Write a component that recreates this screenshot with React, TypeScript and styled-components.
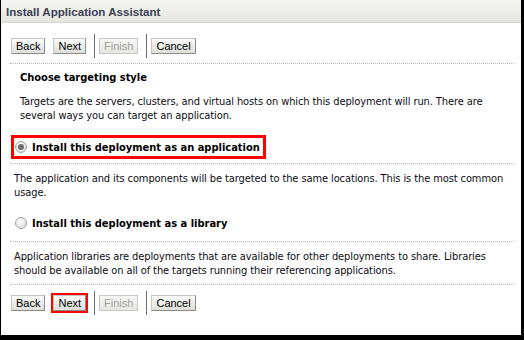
import React from "react";
import styled, { createGlobalStyle, css } from "styled-components";

const Global = createGlobalStyle`
  html, body { margin: 0; padding: 0; background: #ffffff; }
  * { box-sizing: border-box; }
`;

const Frame = styled.div`
  width: 524px;
  height: 340px;
  background: #fff;
  border-right: 3px solid #000;
  border-bottom: 5px solid #000;
  border-left: 1px solid #000;
  display: flex;
  flex-direction: column;
  font-family: "DejaVu Sans Condensed", "Liberation Sans", sans-serif;
  font-size: 11px;
  letter-spacing: -0.1px;
  color: #000;
  overflow: hidden;
`;

const TitleBar = styled.div`
  height: 23px;
  flex: none;
  background: linear-gradient(#f6f6f3, #e6e6e0);
  border-bottom: 1px solid #d6d6d1;
  padding-left: 5px;
  display: flex;
  align-items: center;
  font-family: "Liberation Sans", Arial, sans-serif;
  font-weight: bold;
  font-size: 11.6px;
  letter-spacing: 0;
  color: #3a4252;
`;

const Body = styled.div`
  padding: 0 7px 0 9px;
  display: flex;
  flex-direction: column;
`;

const ButtonRow = styled.div<{ $top: number }>`
  display: flex;
  align-items: center;
  height: 24px;
  padding-left: 1px;
  margin-top: ${(p) => p.$top}px;
`;

const Button = styled.button<{ $disabled?: boolean; $highlight?: boolean }>`
  font-family: "Liberation Sans", Arial, sans-serif;
  font-size: 11px;
  letter-spacing: 0;
  height: 16px;
  padding: 0 4px;
  margin: 0 8px 0 0;
  background: linear-gradient(#fbfbfa, #dededa);
  border: 1px solid #8c8c88;
  border-top-color: #c6c6c2;
  border-left-color: #c6c6c2;
  color: #000;
  line-height: 14px;
  ${(p) =>
    p.$disabled &&
    css`
      color: #a0a0a0;
      background: linear-gradient(#f5f5f3, #e6e6e2);
      border-color: #c8c8c4;
    `}
  ${(p) =>
    p.$highlight &&
    css`
      outline: 2px solid #ff0000;
      outline-offset: 0px;
    `}
`;

const Sep = styled.div`
  width: 1px;
  height: 24px;
  background: #6e6e6e;
  margin: 0 4px 0 0;
`;

const Dotted = styled.div<{ $top: number }>`
  border-top: 1px dotted #b8b8b8;
  margin-top: ${(p) => p.$top}px;
  height: 0;
`;

const Heading = styled.div`
  font-weight: bold;
  font-size: 11px;
  letter-spacing: 0;
  line-height: 14px;
  margin: 7px 0 0 10px;
`;

const Para = styled.p<{ $indent?: number; $top: number }>`
  margin: ${(p) => p.$top}px 0 0 ${(p) => p.$indent ?? 0}px;
  line-height: 14px;
  color: #0d0d14;
`;

const OptionBox = styled.label<{ $highlight?: boolean; $top: number }>`
  display: flex;
  align-items: center;
  gap: 5px;
  height: 24px;
  padding-left: 1px;
  margin: ${(p) => p.$top}px 0 0 1px;
  font-weight: bold;
  font-size: 11px;
  letter-spacing: 0;
  align-self: flex-start;
  width: ${(p) => (p.$highlight ? "255px" : "auto")};
  border: 3px solid ${(p) => (p.$highlight ? "#ff0000" : "transparent")};
`;

const Radio = styled.span<{ $checked?: boolean }>`
  flex: none;
  width: 12px;
  height: 12px;
  border-radius: 50%;
  border: 1px solid #a4a4a4;
  background: radial-gradient(circle at 40% 35%, #ffffff, #d6d6d6);
  display: inline-flex;
  align-items: center;
  justify-content: center;
  &::after {
    content: "";
    width: 6px;
    height: 6px;
    border-radius: 50%;
    background: ${(p) => (p.$checked ? "#6e6e6e" : "transparent")};
  }
`;

function Buttons({ top, nextHighlight }: { top: number; nextHighlight?: boolean }) {
  return (
    <ButtonRow $top={top}>
      <Button>Back</Button>
      <Button $highlight={nextHighlight}>Next</Button>
      <Sep />
      <Button $disabled>Finish</Button>
      <Sep />
      <Button>Cancel</Button>
    </ButtonRow>
  );
}

export default function App() {
  return (
    <>
      <Global />
      <Frame>
        <TitleBar>Install Application Assistant</TitleBar>
        <Body>
          <Buttons top={11} />
          <Dotted $top={5} />
          <Heading>Choose targeting style</Heading>
          <Para $indent={10} $top={10}>
            Targets are the servers, clusters, and virtual hosts on which this deployment will run. There are
            several ways you can target an application.
          </Para>
          <OptionBox $highlight $top={12}>
            <Radio $checked />
            Install this deployment as an application
          </OptionBox>
          <Dotted $top={4} />
          <Para $indent={4} $top={8}>
            The application and its components will be targeted to the same locations. This is the most common
            usage.
          </Para>
          <OptionBox $top={11}>
            <Radio />
            Install this deployment as a library
          </OptionBox>
          <Dotted $top={6} />
          <Para $indent={4} $top={8}>
            Application libraries are deployments that are available for other deployments to share. Libraries
            should be available on all of the targets running their referencing applications.
          </Para>
          <Dotted $top={6} />
          <Buttons top={6} nextHighlight />
        </Body>
      </Frame>
    </>
  );
}
